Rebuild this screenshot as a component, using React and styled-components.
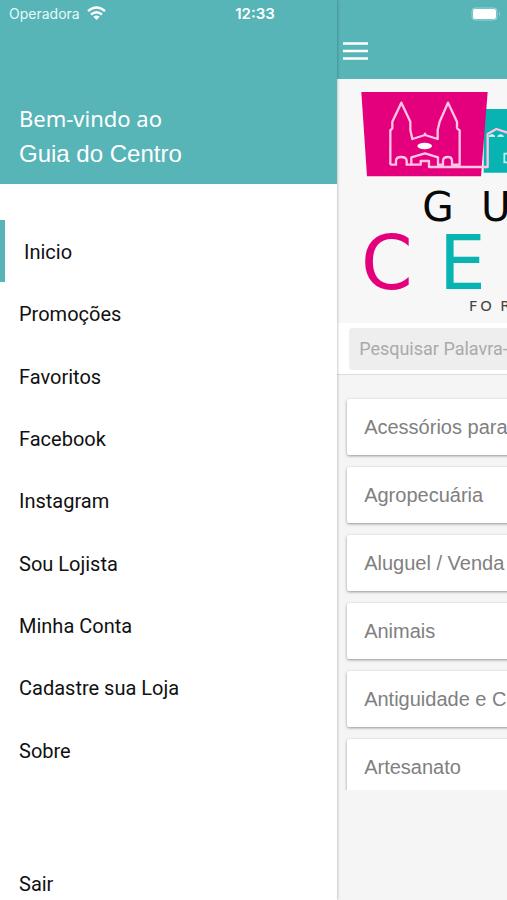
import React from "react";
import styled, { createGlobalStyle } from "styled-components";

const teal = "#57b4b7";

const GlobalStyle = createGlobalStyle`
  * { box-sizing: border-box; }
  body { margin: 0; background: #f5f5f5; font-family: Inter, "Liberation Sans", sans-serif; }
`;

const Screen = styled.div`
  position: relative;
  display: flex;
  height: 100vh;
  overflow: hidden;
`;

const StatusBar = styled.div`
  position: absolute;
  inset: 0 0 auto;
  z-index: 3;
  display: grid;
  grid-template-columns: 1fr auto 1fr;
  align-items: center;
  height: 27px;
  padding: 0 6px 0 9px;
  color: #fff;
  font-size: 14px;
`;

const Carrier = styled.span`
  display: flex;
  align-items: center;
  gap: 7px;
  color: #e6fafa;
`;

const Clock = styled.time`
  font-size: 15px;
  font-weight: 600;
`;

const Battery = styled.svg`
  justify-self: end;
`;

const Drawer = styled.aside`
  position: relative;
  z-index: 2;
  display: flex;
  flex-direction: column;
  flex: 0 0 66.5%;
  background: #fff;
  box-shadow: 0 0 3px rgba(0, 0, 0, 0.35);
`;

const Welcome = styled.header`
  display: flex;
  flex-direction: column;
  justify-content: flex-end;
  height: 184px;
  padding: 0 19px 12px;
  background: ${teal};
  color: #fff;
`;

const Greeting = styled.p`
  margin: 0;
  font: 22px/36px "Noto Sans", sans-serif;
`;

const AppName = styled.h1`
  margin: 0;
  font: 400 24px/36px "Liberation Sans", sans-serif;
`;

const Menu = styled.nav`
  flex: 1;
  display: grid;
  grid-auto-rows: 1fr;
  margin-top: 36px;
`;

const MenuLink = styled.a`
  display: flex;
  align-items: center;
  padding: 2px 19px 0;
  border-left: ${(p) => (p.$active ? `5px solid ${teal}` : "0")};
  color: #111;
  font: 20px/24px Roboto, sans-serif;
  text-decoration: none;
`;

const DrawerFooter = styled.footer`
  display: flex;
  align-items: flex-end;
  height: 119px;
  padding-bottom: 4px;
`;

const Page = styled.main`
  flex: 0 0 100%;
  background: #f5f5f5;
`;

const Toolbar = styled.div`
  display: flex;
  align-items: flex-end;
  height: 79px;
  padding: 0 6px 16px;
  background: ${teal};
`;

const MenuButton = styled.button`
  display: flex;
  padding: 0;
  border: 0;
  background: none;
`;

const Logo = styled.svg`
  display: block;
  width: 100%;
  background: #f7f7f7;
`;

const SearchBar = styled.div`
  padding: 5px 12px 4px;
  background: #fff;
  border-bottom: 1px solid #ddd;
`;

const SearchInput = styled.input`
  display: block;
  width: 100%;
  height: 42px;
  padding: 0 10px 2px;
  border: 0;
  border-radius: 4px;
  background: #eee;
  font: 18px/24px Roboto, sans-serif;
  &::placeholder { color: #aaa; opacity: 1; }
`;

const Categories = styled.ul`
  display: flex;
  flex-direction: column;
  gap: 12px;
  height: 415px;
  margin: 0;
  padding: 24px 10px 0;
  overflow: hidden;
  list-style: none;
`;

const Category = styled.li`
  flex: none;
  background: #fff;
  border-radius: 2px;
  box-shadow: 0 1px 3px rgba(0, 0, 0, 0.4);
`;

const CategoryLink = styled.a`
  display: block;
  padding: 16px 17px;
  color: #808080;
  font: 20px/24px "Liberation Sans", sans-serif;
  text-decoration: none;
`;

const menu = ["Inicio", "Promoções", "Favoritos", "Facebook", "Instagram", "Sou Lojista", "Minha Conta", "Cadastre sua Loja", "Sobre"];
const categories = ["Acessórios para Veículos", "Agropecuária", "Aluguel / Venda", "Animais", "Antiguidade e Coleções", "Artesanato"];

function WifiIcon() {
  return (
    <svg width="19" height="15" viewBox="0 0 19 15" fill="none" stroke="#fff" strokeWidth="2.4" aria-hidden="true">
      <path d="M1 5.200Q9.500-2 18 5.200M4 8.500Q9.500 3.800 15 8.500" />
      <path d="M6.300 10.800Q9.500 8.300 12.700 10.800L9.500 14Z" fill="#fff" stroke="none" />
    </svg>
  );
}

function BrandLogo() {
  return (
    <Logo viewBox="0 0 1521 732" role="img" aria-label="Guia do Centro">
      <path d="M440 90H1080V281H440Z" fill="#08b4b2" />
      <path d="M73 39H452L432 292H90Z" fill="#e4007c" />
      <g fill="none" stroke="#ffc4e4" strokeWidth="7" strokeLinejoin="round">
        <path d="M160 257V154L166 148V128L193 71L220 128V153L226 180L264 168L302 180V153L308 128L333 71L360 128V148L368 154V257H345V246Q345 234 333 234Q318 234 318 246V257H303V235L264 223L223 235V257H251V246H276V264H452V165L478 150L515 162" />
        <path d="M160 257H177V246Q177 234 192 234Q209 234 209 246V257H223M264 161V169" />
      </g>
      <ellipse cx="263" cy="201" rx="22" ry="10" fill="#fff" />
      <path d="M456 172Q464 162 474 172ZM482 172Q490 162 500 172Z" fill="#fff" stroke="#c8f6f5" strokeWidth="3" />
      <path d="M502 224H525V250H502Z" fill="none" stroke="#c8f6f5" strokeWidth="5" />
      <g fontFamily="DejaVu Sans, sans-serif">
        <text x="256 432 550 620" y="427" fontSize="122" fill="#080808">GUIA</text>
        <g fontSize="222">
          <text x="72" y="629" fill="#e4007c">C</text>
          <text x="306 500 720 900 1080" y="629" fill="#08b4b2">ENTRO</text>
        </g>
        <text x="396 430 490" y="696" fontSize="44" fill="#444">FOR</text>
      </g>
    </Logo>
  );
}

export default function App() {
  return (
    <>
      <GlobalStyle />
      <Screen>
        <StatusBar>
          <Carrier>Operadora <WifiIcon /></Carrier>
          <Clock>12:33</Clock>
          <Battery width="30" height="14" viewBox="0 0 30 14" aria-label="Bateria">
            <rect x="1" y="1" width="25" height="12" rx="3" fill="none" stroke="#9ed4d6" />
            <rect x="2" y="2" width="23" height="10" rx="2" fill="#fff" />
            <path d="M28 5V9Q30 7 28 5Z" fill="#9ed4d6" />
          </Battery>
        </StatusBar>
        <Drawer>
          <Welcome>
            <Greeting>Bem-vindo ao</Greeting>
            <AppName>Guia do Centro</AppName>
          </Welcome>
          <Menu>
            {menu.map((label, i) => (
              <MenuLink key={label} href="#" $active={i === 0}>{label}</MenuLink>
            ))}
          </Menu>
          <DrawerFooter>
            <MenuLink href="#">Sair</MenuLink>
          </DrawerFooter>
        </Drawer>
        <Page>
          <Toolbar>
            <MenuButton aria-label="Menu">
              <svg width="25" height="24" viewBox="0 0 25 24" stroke="#fff" strokeWidth="2.6">
                <path d="M0 4.500H25M0 12H25M0 19.500H25" />
              </svg>
            </MenuButton>
          </Toolbar>
          <BrandLogo />
          <SearchBar>
            <SearchInput type="search" aria-label="Pesquisar" placeholder="Pesquisar Palavra-chave" />
          </SearchBar>
          <Categories>
            {categories.map((label) => (
              <Category key={label}><CategoryLink href="#">{label}</CategoryLink></Category>
            ))}
          </Categories>
        </Page>
      </Screen>
    </>
  );
}
